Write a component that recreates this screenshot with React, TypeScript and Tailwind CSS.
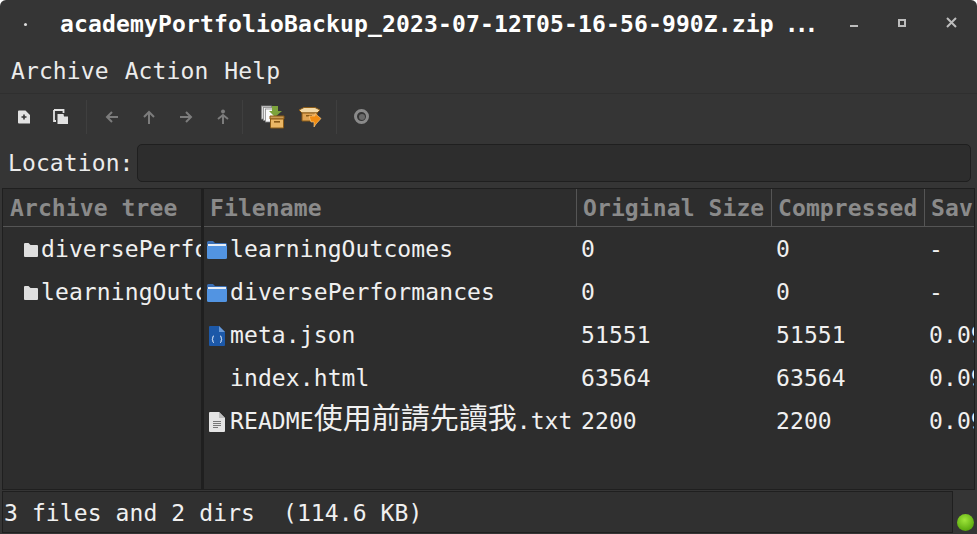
import React from 'react';

const font = { fontFamily: '"DejaVu Sans Mono", "Noto Sans CJK TC", monospace' };

function FolderBlue() {
  return (
    <svg width="20" height="18" viewBox="0 0 20 18" className="shrink-0">
      <path d="M0 1.5 Q0 0 1.5 0 H6 L8 2 H18.5 Q20 2 20 3.5 V6 H0 Z" fill="#3a6fb5" />
      <rect x="1" y="3" width="18" height="2" fill="#e8eef6" />
      <path d="M0 5 H20 V16.5 Q20 18 18.5 18 H1.5 Q0 18 0 16.5 Z" fill="#5294e2" />
    </svg>
  );
}

function FolderGray() {
  return (
    <svg width="14" height="14" viewBox="0 0 14 14" className="shrink-0">
      <path d="M0 1 Q0 0 1 0 H4.5 L6.5 2 H13 Q14 2 14 3 V13 Q14 14 13 14 H1 Q0 14 0 13 Z" fill="#dedede" />
    </svg>
  );
}

function JsonFile() {
  return (
    <svg width="16" height="20" viewBox="0 0 16 20" className="shrink-0">
      <path d="M1 0 H10 L16 6 V19 Q16 20 15 20 H1 Q0 20 0 19 V1 Q0 0 1 0 Z" fill="#1c58a8" />
      <path d="M10 0 L16 6 H10 Z" fill="#6b9ad6" />
      <path d="M5 10 Q3.8 10 3.8 11 V12.5 L3 13.2 L3.8 14 V15.5 Q3.8 16.4 5 16.4 M11 10 Q12.2 10 12.2 11 V12.5 L13 13.2 L12.2 14 V15.5 Q12.2 16.4 11 16.4" fill="none" stroke="#e6eefa" strokeWidth="1" />
    </svg>
  );
}

function TextFile() {
  return (
    <svg width="16" height="20" viewBox="0 0 16 20" className="shrink-0">
      <path d="M1 0 H10 L16 6 V19 Q16 20 15 20 H1 Q0 20 0 19 V1 Q0 0 1 0 Z" fill="#e4e4e4" />
      <path d="M10 0 L16 6 H10 Z" fill="#bdbdbd" />
      <path d="M4 9.5 H12 M4 11.5 H12 M4 13.5 H12 M4 15.5 H9" stroke="#777" strokeWidth="1" />
    </svg>
  );
}

function NewArchive() {
  return (
    <svg width="14" height="14" viewBox="0 0 14 14">
      <path fillRule="evenodd" d="M2 0.5 H8.5 L13 5 V13.5 H2 Q1 13.5 1 12.5 V1.5 Q1 0.5 2 0.5 Z M6.2 4.5 V6.2 H4.5 V7.8 H6.2 V9.5 H7.8 V7.8 H9.5 V6.2 H7.8 V4.5 Z" fill="#e2e2e2" />
    </svg>
  );
}

function OpenArchive() {
  return (
    <svg width="16" height="16" viewBox="0 0 16 16">
      <path d="M1 1 H10.5 V4 M1 1 V12 H3" fill="none" stroke="#e2e2e2" strokeWidth="1.8" />
      <path d="M4.5 5 H10.5 L11 7.5 H15 V15 H4.5 Z" fill="#e2e2e2" />
    </svg>
  );
}

function ArrowIcon({ dir }: { dir: 'left' | 'up' | 'right' | 'home' }) {
  const paths = {
    left: 'M14 8 H3 M8 3 L3 8 L8 13',
    up: 'M8 15 V3 M3 8 L8 3 L13 8',
    right: 'M2 8 H13 M8 3 L13 8 L8 13',
    home: 'M8 15 V6 M3 10 L8 6 L13 10',
  };
  return (
    <svg width="16" height="16" viewBox="0 0 16 16" fill="none">
      <path d={paths[dir]} stroke="#7c7c7c" strokeWidth="2" />
      {dir === 'home' && <circle cx="8" cy="2.5" r="2" fill="#7c7c7c" />}
    </svg>
  );
}

function ExtractIcon() {
  return (
    <svg width="24" height="24" viewBox="0 0 24 24">
      <rect x="0.5" y="1" width="10" height="13" fill="#d8d8d8" stroke="#888" strokeWidth="0.8" />
      <rect x="2.5" y="2.5" width="10" height="13" fill="#f0f0f0" stroke="#888" strokeWidth="0.8" />
      <rect x="4.5" y="4" width="10" height="13" fill="#fafafa" stroke="#888" strokeWidth="0.8" />
      <path d="M11 1 H17 V6 H21 L14 12 L8 6 H11 Z" fill="#7da33c" />
      <path d="M9 11 H23 V14 H9 Z" fill="#c99a55" stroke="#8a5a16" strokeWidth="1" />
      <path d="M9.5 14 H22.5 V23 H9.5 Z" fill="#eab766" stroke="#8a5a16" strokeWidth="1" />
      <rect x="13" y="16" width="6" height="1.6" fill="#8a5a16" />
    </svg>
  );
}

function AddIcon() {
  return (
    <svg width="24" height="20" viewBox="0 0 24 20">
      <path d="M1 3 L6 0.5 H17 L22 3 L19 6 H4 Z" fill="#f3d9a6" stroke="#8a5a16" strokeWidth="1" />
      <path d="M4 6 H19 V14 H4 Z" fill="#e0a555" stroke="#8a5a16" strokeWidth="1" />
      <rect x="8" y="8" width="6" height="1.5" fill="#8a5a16" />
      <path d="M11 9 H17 V6.5 L23 11.5 L18 17 L16 20 V15 H13 Z" fill="#f08c12" stroke="#fdd28f" strokeWidth="0.6" />
    </svg>
  );
}

function Sep() {
  return <div className="w-px h-[34px] bg-[#3f3f3f]" />;
}

function ToolBtn({ children }: { children: React.ReactNode }) {
  return <div className="flex items-center justify-center h-full w-[37px]">{children}</div>;
}

const rows = [
  { icon: <FolderBlue />, name: 'learningOutcomes', orig: '0', comp: '0', sav: '-' },
  { icon: <FolderBlue />, name: 'diversePerformances', orig: '0', comp: '0', sav: '-' },
  { icon: <JsonFile />, name: 'meta.json', orig: '51551', comp: '51551', sav: '0.09%' },
  { icon: null, name: 'index.html', orig: '63564', comp: '63564', sav: '0.09%' },
  { icon: <TextFile />, name: 'README', cjk: '使用前請先讀我', ext: '.txt', orig: '2200', comp: '2200', sav: '0.09%' },
];

export default function App() {
  return (
    <div className="w-[977px] h-[534px] overflow-hidden bg-[#353535] text-[#f0f0f0] text-[23px] leading-none tracking-[0.1px] rounded-t-[6px] flex flex-col" style={font}>
      {/* title bar */}
      <div className="h-[47px] flex items-center shrink-0 pt-[2px]">
        <div className="w-[60px] flex justify-center pr-[10px] pb-[1px]">
          <div className="w-[3px] h-[3px] rounded-full bg-[#dddddd]" />
        </div>
        <div className="font-bold text-white whitespace-pre w-[775px] tracking-[0.15px]">
          academyPortfolioBackup_2023-07-12T05-16-56-990Z.zip <span className="tracking-[-4px] ml-[-3px]">...</span>
        </div>
        <div className="flex-1 flex items-center pl-[15px] gap-[40px]">
          <div className="w-[8px] h-[2px] bg-[#bdbdbd] mt-[2px]" />
          <div className="w-[8px] h-[8px] border-2 border-[#bdbdbd] mt-[-4px]" />
          <svg width="11" height="11" viewBox="0 0 11 11" className="mt-[-4px]">
            <path d="M1 1 L10 10 M10 1 L1 10" stroke="#bdbdbd" strokeWidth="2" />
          </svg>
        </div>
      </div>

      {/* menu */}
      <div className="h-[47px] flex items-center pl-[11px] gap-[16px] pt-[2px] border-b border-[#2f2f2f] shrink-0 text-[#ececec]">
        <span>Archive</span>
        <span>Action</span>
        <span>Help</span>
      </div>

      {/* toolbar */}
      <div className="h-[45px] flex items-center pl-[5px] shrink-0">
        <ToolBtn><NewArchive /></ToolBtn>
        <ToolBtn><OpenArchive /></ToolBtn>
        <div className="w-[7px]" />
        <Sep />
        <div className="w-[6px]" />
        <ToolBtn><ArrowIcon dir="left" /></ToolBtn>
        <ToolBtn><ArrowIcon dir="up" /></ToolBtn>
        <ToolBtn><ArrowIcon dir="right" /></ToolBtn>
        <ToolBtn><ArrowIcon dir="home" /></ToolBtn>
        <div className="w-[1px]" />
        <Sep />
        <div className="w-[11px]" />
        <ToolBtn><ExtractIcon /></ToolBtn>
        <ToolBtn><AddIcon /></ToolBtn>
        <div className="w-[8px]" />
        <Sep />
        <div className="w-[6px]" />
        <ToolBtn>
          <div className="w-[15px] h-[15px] rounded-full border-[3px] border-[#8a8a8a] flex items-center justify-center">
            <div className="w-[6px] h-[6px] rounded-full bg-[#6a6a6a]" />
          </div>
        </ToolBtn>
      </div>

      {/* location */}
      <div className="h-[46px] flex items-center pl-[8px] pr-[6px] gap-[3px] shrink-0 text-[#ececec] pt-[2px]">
        <span>Location:</span>
        <div className="flex-1 h-[38px] bg-[#2d2d2d] border border-[#1f1f1f] rounded-[5px]" />
      </div>

      {/* panes */}
      <div className="ml-[2px] mr-[2px] h-[302px] flex border border-[#1f1f1f] bg-[#2d2d2d] shrink-0 mt-[3px]">
        <div className="w-[198px] overflow-hidden shrink-0">
          <div className="h-[38px] flex items-center pl-[7px] pt-[2px] font-bold text-[#8a8a8a] border-b border-[#555]">
            Archive tree
          </div>
          <div className="pt-[1px]">
            {['diversePerformances', 'learningOutcomes'].map((n) => (
              <div key={n} className="h-[43px] flex items-center pl-[21px] gap-[3px] whitespace-nowrap">
                <FolderGray />
                <span>{n}</span>
              </div>
            ))}
          </div>
        </div>
        <div className="w-[3px] bg-[#1f1f1f] shrink-0" />
        <div className="flex-1 overflow-hidden min-w-0">
          <div className="h-[38px] grid grid-cols-[373px_195px_153px_52px] font-bold text-[#8a8a8a] border-b border-[#555] whitespace-nowrap">
            <div className="flex items-center pl-[6px] pt-[2px] border-r border-[#555]">Filename</div>
            <div className="flex items-center pl-[6px] pt-[2px] border-r border-[#555]">Original Size</div>
            <div className="flex items-center pl-[6px] pt-[2px] border-r border-[#555]">Compressed</div>
            <div className="flex items-center pl-[6px] pt-[2px]">Sav</div>
          </div>
          <div className="pt-[1px]">
            {rows.map((r) => (
              <div key={r.name} className="h-[43px] grid grid-cols-[373px_195px_153px_52px] items-center whitespace-nowrap">
                <div className="flex items-center">
                  <div className="w-[26px] pl-[2px] shrink-0 flex justify-center pr-[3px]">{r.icon}</div>
                  <span>
                    {r.name}
                    {r.cjk && <span className="text-[29px] leading-[0] tracking-normal">{r.cjk}</span>}
                    {r.ext}
                  </span>
                </div>
                <div className="pl-[4px]">{r.orig}</div>
                <div className="pl-[4px]">{r.comp}</div>
                <div className="pl-[4px]">{r.sav}</div>
              </div>
            ))}
          </div>
        </div>
      </div>

      {/* status */}
      <div className="flex-1 flex items-stretch pl-[2px]">
        <div className="w-[951px] h-[42px] mt-[1px] flex items-center pl-[1px] pt-[2px] bg-[#303030] border border-[#1f1f1f] whitespace-pre text-[#f0f0f0]">
          3 files and 2 dirs  (114.6 KB)
        </div>
        <div className="flex-1 flex items-end justify-center pb-[3px]">
          <div className="w-[17px] h-[17px] rounded-full bg-[radial-gradient(circle_at_45%_35%,#9fe63a,#5aa80e_75%)]" />
        </div>
      </div>
    </div>
  );
}
